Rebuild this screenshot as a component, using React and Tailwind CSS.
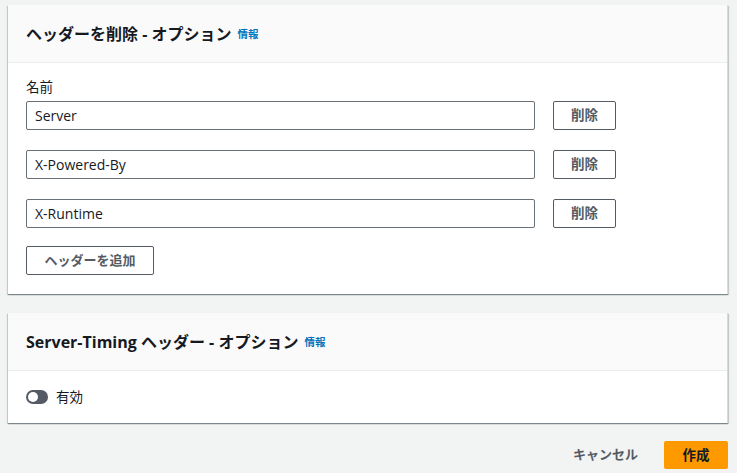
import React from "react";

const font = { fontFamily: '"Open Sans", "Noto Sans CJK JP", sans-serif' };

function Card({ title, children }) {
  return (
    <div className="bg-white border-r border-[#d5dbdb] shadow-[0_1px_1px_0_rgba(0,28,36,0.3),1px_1px_1px_0_rgba(0,28,36,0.15),-1px_1px_1px_0_rgba(0,28,36,0.15)]">
      <div className="h-[58px] bg-[#fafafa] border-b border-[#eaeded] flex items-center px-[18px]">
        <span className="text-[16px] font-bold text-[#16191f] leading-none">{title}</span>
        <span className="ml-[6px] text-[10.5px] font-bold text-[#0073bb] leading-none mt-[2px]">情報</span>
      </div>
      {children}
    </div>
  );
}

function Row({ value }) {
  return (
    <div className="flex items-center">
      <div className="w-[509px] h-[29px] border border-[#687078] rounded-[2px] flex items-center px-[8px] text-[14px] text-[#16191f]">
        {value}
      </div>
      <button className="ml-[18px] w-[63px] h-[29px] border border-[#545b64] rounded-[2px] text-[13.5px] font-bold text-[#545b64] flex items-center justify-center">
        削除
      </button>
    </div>
  );
}

export default function App() {
  return (
    <div className="w-[737px] h-[473px] bg-[#f2f3f3] pt-[5px] pl-[8px] pr-[9px]" style={font}>
      <Card title="ヘッダーを削除 - オプション">
        <div className="px-[18px] pt-[14px] pb-[19px]">
          <div className="text-[13.5px] text-[#16191f] leading-[20px] mb-[4px]">名前</div>
          <div className="flex flex-col gap-[20px]">
            <Row value="Server" />
            <Row value="X-Powered-By" />
            <Row value="X-Runtime" />
          </div>
          <button className="mt-[18px] w-[128px] h-[29px] border border-[#545b64] rounded-[2px] text-[13px] font-bold text-[#545b64] flex items-center justify-center">
            ヘッダーを追加
          </button>
        </div>
      </Card>
      <div className="h-[19px]" />
      <Card title="Server-Timing ヘッダー - オプション">
        <div className="px-[18px] h-[52px] flex items-center">
          <div className="w-[22px] h-[14px] rounded-full bg-[#545b64] relative">
            <div className="absolute left-[2px] top-[2px] w-[10px] h-[10px] rounded-full bg-white" />
          </div>
          <span className="ml-[8px] text-[13.5px] text-[#16191f]">有効</span>
        </div>
      </Card>
      <div className="flex justify-end items-center mt-[18px]">
        <span className="text-[13px] font-bold text-[#545b64] mr-[26px]">キャンセル</span>
        <button className="w-[64px] h-[28px] bg-[#ff9900] rounded-[2px] text-[13.5px] font-bold text-[#16191f] flex items-center justify-center">
          作成
        </button>
      </div>
    </div>
  );
}
